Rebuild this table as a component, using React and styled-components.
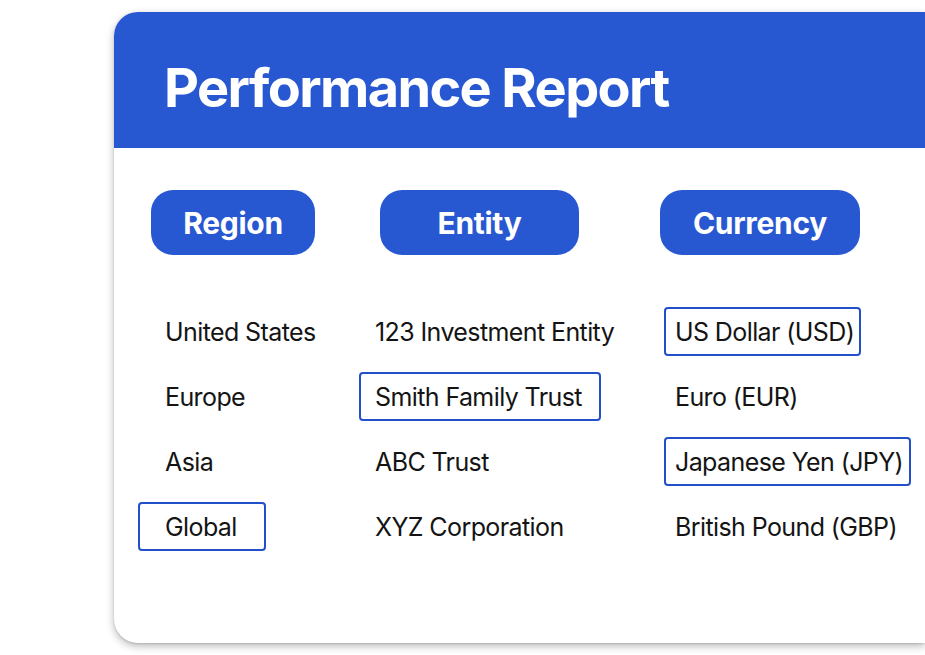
import React from "react";
import styled, { createGlobalStyle } from "styled-components";

const GlobalStyle = createGlobalStyle`
  html, body {
    margin: 0;
    padding: 0;
    background: #ffffff;
    overflow: hidden;
  }
  body {
    font-family: Inter, "Noto Sans", sans-serif;
  }
`;

const columns = [
  {
    title: "Region",
    pillWidth: 164,
    items: [
      { label: "United States" },
      { label: "Europe" },
      { label: "Asia" },
      { label: "Global", boxed: true, pad: 25, padR: 27 },
    ],
  },
  {
    title: "Entity",
    pillWidth: 199,
    items: [
      { label: "123 Investment Entity" },
      { label: "Smith Family Trust", boxed: true, pad: 14, padR: 17 },
      { label: "ABC Trust" },
      { label: "XYZ Corporation" },
    ],
  },
  {
    title: "Currency",
    pillWidth: 200,
    items: [
      { label: "US Dollar (USD)", boxed: true, pad: 9, padR: 5 },
      { label: "Euro (EUR)" },
      { label: "Japanese Yen (JPY)", boxed: true, pad: 9, padR: 6 },
      { label: "British Pound (GBP)" },
    ],
  },
];

const App = () => {
  return (
    <Page>
      <GlobalStyle />
      <Card>
        <Header>
          <Title>Performance Report</Title>
        </Header>
        <Body>
          <PillRow>
            {columns.map((c) => (
              <Pill key={c.title} $width={c.pillWidth}>
                {c.title}
              </Pill>
            ))}
          </PillRow>
          <ListGrid>
            {columns.map((c) => (
              <List key={c.title}>
                {c.items.map((it) => (
                  <Item
                    key={it.label}
                    $boxed={it.boxed}
                    $pad={it.pad || 0}
                    $padR={it.padR ?? it.pad ?? 0}
                  >
                    {it.label}
                  </Item>
                ))}
              </List>
            ))}
          </ListGrid>
        </Body>
      </Card>
    </Page>
  );
};

export default App;

const Page = styled.div`
  width: 925px;
  height: 655px;
  padding: 12px 0 0 114px;
  box-sizing: border-box;
`;

const Card = styled.div`
  width: 811px;
  height: 631px;
  background: #ffffff;
  border-radius: 24px 0 0 24px;
  overflow: hidden;
  box-shadow: 0 3px 8px rgba(0, 0, 0, 0.28), 0 1px 2px rgba(0, 0, 0, 0.12);
  display: flex;
  flex-direction: column;
`;

const Header = styled.div`
  height: 136px;
  background: #2858d1;
  display: flex;
  align-items: center;
  padding-left: 50px;
  padding-top: 14px;
  box-sizing: border-box;
`;

const Title = styled.h1`
  margin: 0;
  color: #ffffff;
  font-size: 54px;
  font-weight: 700;
  letter-spacing: -1.6px;
`;

const Body = styled.div`
  padding: 42px 0 0 37px;
`;

const PillRow = styled.div`
  display: grid;
  grid-template-columns: 229px 280px auto;
  align-items: start;
`;

const Pill = styled.div`
  width: ${(p) => p.$width}px;
  height: 65px;
  border-radius: 22px;
  background: #2858d1;
  color: #ffffff;
  font-size: 30px;
  font-weight: 700;
  letter-spacing: -0.3px;
  display: flex;
  align-items: center;
  justify-content: center;
  box-sizing: border-box;
`;

const ListGrid = styled.div`
  display: grid;
  grid-template-columns: 210px 300px auto;
  margin-top: 52px;
  padding-left: 14px;
`;

const List = styled.div`
  display: flex;
  flex-direction: column;
  align-items: flex-start;
  gap: 16px;
`;

const Item = styled.div`
  height: 49px;
  box-sizing: border-box;
  display: flex;
  align-items: center;
  padding: 0 ${(p) => p.$padR}px 0 ${(p) => p.$pad}px;
  margin-left: ${(p) => -(p.$pad + 2)}px;
  border: 2px solid ${(p) => (p.$boxed ? "#2150c8" : "transparent")};
  border-radius: 4px;
  color: #141414;
  font-size: 25px;
  font-weight: 400;
  letter-spacing: -0.6px;
  white-space: nowrap;
`;
